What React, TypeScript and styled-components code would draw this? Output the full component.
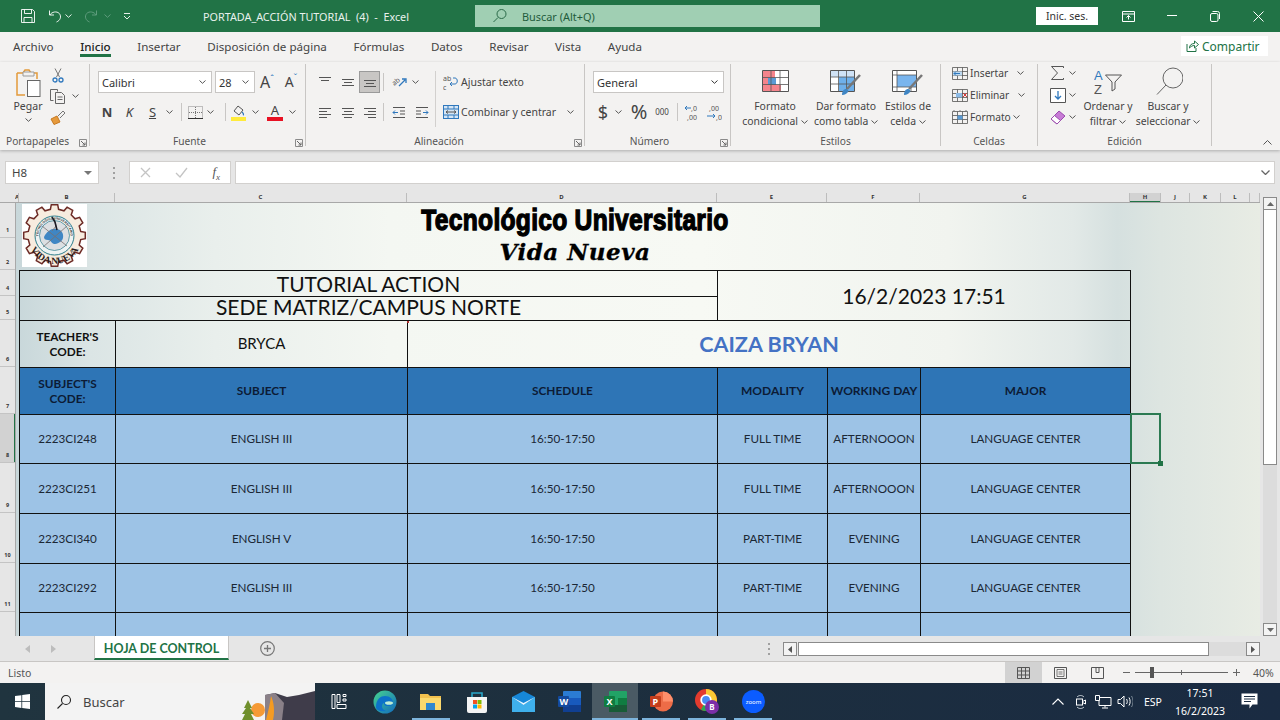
import React from 'react'
import styled, { createGlobalStyle } from 'styled-components'

const UI = `"Noto Sans", "Open Sans", sans-serif`
const SHEET = `Lato, "Open Sans", sans-serif`

const Global = createGlobalStyle`
  html, body { margin: 0; padding: 0; width: 1280px; height: 720px; overflow: hidden; }
  body { font-family: ${UI}; background: #e6e6e6; }
`

const Ic = ({ w, h, children }: { w: number; h: number; children?: React.ReactNode }) => (
  <svg width={w} height={h} viewBox={`0 0 ${w} ${h}`} fill="none" style={{ display: 'block', flex: 'none' }}>
    {children}
  </svg>
)

const Caret = ({ color = '#555' }: { color?: string }) => (
  <Ic w={7} h={4}>
    <path d="M.5.5 3.5 3.3 6.5.5" stroke={color} />
  </Ic>
)

const Launcher = () => (
  <Ic w={8} h={8}>
    <path d="M.5 7.5V.5h7v7z" stroke="#8a8a8a" />
    <path d="M2 2l4 4M6 3.5V6H3.5" stroke="#666" />
  </Ic>
)

const AlignLines = ({ kind, y = 0 }: { kind: 'l' | 'c' | 'r' | 't' | 'm' | 'b'; y?: number }) => {
  const xs = kind === 'l' ? [[1, 13], [1, 9], [1, 13], [1, 9]] : kind === 'r' ? [[1, 13], [5, 13], [1, 13], [5, 13]] : kind === 'c' ? [[1, 13], [3, 11], [1, 13], [3, 11]] : []
  if (xs.length) {
    return (
      <Ic w={14} h={13}>
        {xs.map((p, i) => <path key={i} d={`M${p[0]} ${2.5 + i * 3}H${p[1]}`} stroke="#555" />)}
      </Ic>
    )
  }
  return (
    <Ic w={14} h={14}>
      <path d={`M1 ${y + 2.5}H13M3 ${y + 5.5}H11`} stroke="#555" />
      {kind !== 't' && <path d={`M1 ${y + 8.5}H13`} stroke="#555" />}
    </Ic>
  )
}

const GearLogo = () => {
  const teeth = 12
  const pts: string[] = []
  for (let i = 0; i < teeth; i++) {
    const a = (i / teeth) * Math.PI * 2
    const s = (Math.PI * 2) / teeth
    const p = (r: number, t: number) => `${(32.5 + r * Math.cos(t)).toFixed(1)},${(31.5 + r * Math.sin(t)).toFixed(1)}`
    pts.push(p(26.5, a - s * 0.3), p(31, a - s * 0.2), p(31, a + s * 0.2), p(26.5, a + s * 0.3))
  }
  return (
    <svg width={65} height={63} viewBox="0 0 65 63" style={{ display: 'block' }}>
      <rect width={65} height={63} fill="#fff" />
      <polygon points={pts.join(' ')} fill="#f7ecdf" stroke="#6d2b26" strokeWidth={1.5} />
      <circle cx={32.5} cy={31.5} r={19.5} fill="#eef3f3" stroke="#2c7d8c" strokeWidth={1} />
      <circle cx={32.5} cy={31.5} r={15} fill="#dcdfe2" stroke="#2c7d8c" strokeWidth={0.7} />
      <path d="M22 33c3-6 8-9 12-8 5 0 8 4 7 9-1 4-6 6-9 6-3-1-3-4-6-4s-4-1-4-3z" fill="#3f86c4" />
      <path d="M32 14l2 8-4 5M20 22l25 20M45 22L21 43" stroke="#77706f" strokeWidth={0.8} fill="none" />
      <path d="M30 13l3 5 2 8" stroke="#1b1b25" strokeWidth={1.6} fill="none" />
      <defs>
        <path id="logoTop" d="M17.500 37a16 16 0 1 1 30 0" />
        <path id="logoBottom" d="M5.500 33a27 27 0 0 0 54 0" />
      </defs>
      <text fontFamily='"Liberation Sans", sans-serif' fontSize={3.300} fontWeight={700} fill="#333" textAnchor="middle">
        <textPath href="#logoTop" startOffset="50%">TECNOLOGICO UNIVERSITARIO</textPath>
      </text>
      <text fontFamily='"Liberation Serif", serif' fontSize={9.500} fontWeight={700} fill="#2a1c1a" textAnchor="middle">
        <textPath href="#logoBottom" startOffset="50%">VIDA NUEVA</textPath>
      </text>
    </svg>
  )
}

const columnHeads: [number, string][] = [[4, 'A'], [96, 'B'], [292, 'C'], [310, 'D'], [110, 'E'], [93, 'F'], [210, 'G'], [31, 'H'], [29, 'J'], [31, 'K'], [29, 'L'], [10, '']]
const rowHeads: [number, string][] = [[35, '1'], [32, '2'], [26, '4'], [24, '5'], [47, '6'], [47, '7'], [49, '8'], [50, '9'], [50, '10'], [49, '11'], [30, '']]

const tableRows = [
  ['2223CI248', 'ENGLISH III', '16:50-17:50', 'FULL TIME', 'AFTERNOOON', 'LANGUAGE CENTER'],
  ['2223CI251', 'ENGLISH III', '16:50-17:50', 'FULL TIME', 'AFTERNOOON', 'LANGUAGE CENTER'],
  ['2223CI340', 'ENGLISH V', '16:50-17:50', 'PART-TIME', 'EVENING', 'LANGUAGE CENTER'],
  ['2223CI292', 'ENGLISH III', '16:50-17:50', 'PART-TIME', 'EVENING', 'LANGUAGE CENTER'],
  ['', '', '', '', '', ''],
]

export default function App() {
  return (
    <Shell>
      <Global />
      <TitleBar>
        <Slot $w={20}>
          <Ic w={16} h={16}>
            <path d="M1.5 1.5h11l2 2v11h-13z" stroke="#fff" opacity=".9" />
            <path d="M4.5 1.5v4h7v-4M4 14.5v-5h8v5" stroke="#fff" opacity=".9" />
          </Ic>
        </Slot>
        <Slot $w={9} />
        <Slot $w={16}>
          <Ic w={15} h={14}>
            <path d="M1.5 1.5v4.5h4.5M1.8 6c2-3.200 7-4.200 9.500-1.500 2.500 3 1 7-2.800 8.500" stroke="#fff" opacity=".9" />
          </Ic>
        </Slot>
        <Slot $w={10}><Caret color="#e6f0ea" /></Slot>
        <Slot $w={10} />
        <Slot $w={15}>
          <Ic w={15} h={14}>
            <path d="M13.500 1.500v4.500h-4.500M13.200 6c-2-3.200-7-4.200-9.500-1.500-2.500 3-1 7 2.800 8.500" stroke="#5f9c7d" />
          </Ic>
        </Slot>
        <Slot $w={18}><Caret color="#5f9c7d" /></Slot>
        <Slot $w={4} />
        <Slot $w={14}>
          <Ic w={8} h={8}>
            <path d="M1 1.500h6M1 4l3 3 3-3" stroke="#e6f0ea" />
          </Ic>
        </Slot>
        <DocTitle>PORTADA_ACCIÓN TUTORIAL&nbsp; (4)&nbsp; -&nbsp; Excel</DocTitle>
        <SearchBox>
          <Ic w={16} h={16}>
            <circle cx={9.500} cy={6} r={4.500} stroke="#2a6a48" />
            <path d="M6 9.500 1.500 14" stroke="#2a6a48" />
          </Ic>
          <span>Buscar (Alt+Q)</span>
        </SearchBox>
        <SignIn>Inic. ses.</SignIn>
        <WinBtn $w={60}>
          <Ic w={13} h={11}>
            <path d="M.5.5h12v10H.5zM.5 3h12M6.500 8.500V4.500M4.500 6.500l2-2 2 2" stroke="#fff" />
          </Ic>
        </WinBtn>
        <WinBtn $w={28}><Ic w={10} h={2}><path d="M0 .5h10" stroke="#fff" /></Ic></WinBtn>
        <WinBtn $w={58}>
          <Ic w={10} h={11}>
            <rect x={.5} y={2.500} width={7.500} height={8} rx={1.500} stroke="#fff" />
            <path d="M2.500.5h5a2 2 0 0 1 2 2v5.500" stroke="#fff" />
          </Ic>
        </WinBtn>
        <WinBtn $w={28}><Ic w={11} h={11}><path d="M.5.5l10 10M10.500.5l-10 10" stroke="#fff" /></Ic></WinBtn>
      </TitleBar>

      <TabsRow>
        <Tab>Archivo</Tab>
        <Tab $active>Inicio</Tab>
        <Tab>Insertar</Tab>
        <Tab>Disposición de página</Tab>
        <Tab>Fórmulas</Tab>
        <Tab>Datos</Tab>
        <Tab>Revisar</Tab>
        <Tab>Vista</Tab>
        <Tab>Ayuda</Tab>
        <ShareBtn>
          <Ic w={13} h={12}>
            <path d="M1 4v7.500h9V8M3.500 8c0-3 2-4.500 5-4.500V1l4 3.500-4 3.500V5.500C6.500 5.500 5 6.300 3.500 8z" stroke="#217346" />
          </Ic>
          Compartir
        </ShareBtn>
      </TabsRow>

      <Ribbon>
        <Group $w={90}>
          <Body $left={0} $top={4}>
            <PasteCol>
              <Ic w={26} h={30}>
                <path d="M2 5h6l2-3h4l2 3h6v6M2 5v22h8" stroke="#e39a3b" strokeWidth={1.500} />
                <path d="M8 4h11v4H8z" stroke="#9a9a9a" fill="#f3f2f1" />
                <rect x={12.500} y={12.500} width={12.500} height={16} fill="#fff" stroke="#666" />
              </Ic>
              <PasteLabel>Pegar</PasteLabel>
              <Caret />
            </PasteCol>
            <ClipCol>
              <Slot $w={16} $h={20}>
                <Ic w={12} h={15}>
                  <path d="M3 .5 7.500 9M9 .5 4.500 9" stroke="#777" />
                  <circle cx={3} cy={12} r={2} stroke="#2f78bd" strokeWidth={1.300} />
                  <circle cx={9} cy={12} r={2} stroke="#2f78bd" strokeWidth={1.300} />
                </Ic>
              </Slot>
              <ClipRow>
                <Ic w={15} h={16}>
                  <path d="M3.500 12.500h-3V1.500h7v2" stroke="#666" />
                  <path d="M5.500 4.500h6l3 3v8h-9zM7.500 9h5M7.500 11.500h5" stroke="#666" />
                </Ic>
                <Caret />
              </ClipRow>
              <Slot $w={16} $h={20}>
                <Ic w={16} h={15}>
                  <path d="M1 9l6-3 3 6-6 2.500z" fill="#e69a3c" stroke="#c77a22" />
                  <path d="M8 6l5-5 2 2-5 5" stroke="#777" />
                </Ic>
              </Slot>
            </ClipCol>
          </Body>
          <GroupLabel $left={6}>Portapapeles</GroupLabel>
          <LaunchSpot><Launcher /></LaunchSpot>
        </Group>

        <Group $w={216}>
          <Body $left={8} $col>
            <ToolRow>
              <Select $w={114}>Calibri<Caret /></Select>
              <Select $w={40} $ml={3}>28<Caret /></Select>
              <Slot $w={24}><BigA $size={16}>A<sup>ˆ</sup></BigA></Slot>
              <Slot $w={24}><BigA $size={14}>A<sup>ˇ</sup></BigA></Slot>
            </ToolRow>
            <ToolRow $ml={-2}>
              <Slot $w={22}><Face $bold>N</Face></Slot>
              <Slot $w={23}><Face $italic>K</Face></Slot>
              <Slot $w={23}><Face $under>S</Face></Slot>
              <Slot $w={10}><Caret /></Slot>
              <Slot $w={14}><Rule /></Slot>
              <Slot $w={14}>
                <Ic w={15} h={13}>
                  <path d="M.5.5h14v12H.5z" stroke="#888" strokeDasharray="1 1" />
                  <path d="M7.500 1v11M1 6.500h13" stroke="#777" strokeDasharray="1 1" />
                  <path d="M0 12.500h15" stroke="#333" />
                </Ic>
              </Slot>
              <Slot $w={17}><Caret /></Slot>
              <Slot $w={12}><Rule /></Slot>
              <Slot $w={16}>
                <Ic w={16} h={17}>
                  <path d="M3 7l4-5 5 4-4 5z" stroke="#555" />
                  <path d="M11 8c1.500 1.500 2 2.500 1 3.200" stroke="#2f78bd" strokeWidth={1.200} />
                  <rect y={13} width={15} height={4} fill="#ffeb3b" />
                </Ic>
              </Slot>
              <Slot $w={16}><Caret /></Slot>
              <Slot $w={24}>
                <FontColor>A</FontColor>
              </Slot>
              <Slot $w={10}><Caret /></Slot>
            </ToolRow>
          </Body>
          <GroupLabel $center $shift={16}>Fuente</GroupLabel>
          <LaunchSpot><Launcher /></LaunchSpot>
        </Group>

        <Group $w={279}>
          <Body $left={0}>
            <AlignPane>
              <ToolRow>
                <Slot $w={24}><AlignLines kind="t" /></Slot>
                <Slot $w={22}><AlignLines kind="m" y={2} /></Slot>
                <Pressed $w={21}><AlignLines kind="b" y={3} /></Pressed>
                <Slot $w={7}><Rule /></Slot>
                <Slot $w={24}>
                  <Ic w={18} h={18}>
                    <text x={2} y={11} fontSize={7} fill="#555" fontFamily='"Noto Sans", sans-serif' transform="rotate(-40 6 9)">ab</text>
                    <path d="M9 13l6-6M12 6h4v4" stroke="#2f78bd" strokeWidth={1.300} />
                  </Ic>
                </Slot>
                <Slot $w={8}><Caret /></Slot>
              </ToolRow>
              <ToolRow>
                <Slot $w={24}><AlignLines kind="l" /></Slot>
                <Slot $w={22}><AlignLines kind="c" /></Slot>
                <Slot $w={21}><AlignLines kind="r" /></Slot>
                <Slot $w={7}><Rule /></Slot>
                <Slot $w={23}>
                  <Ic w={14} h={13}>
                    <path d="M1 1.500h12M8 5h5M8 8h5M1 11.500h12" stroke="#555" />
                    <path d="M6 6.500H1M3 4.500l-2 2 2 2" stroke="#2f78bd" />
                  </Ic>
                </Slot>
                <Slot $w={23}>
                  <Ic w={14} h={13}>
                    <path d="M1 1.500h12M1 5h5M1 8h5M1 11.500h12" stroke="#555" />
                    <path d="M8 6.500h5M11 4.500l2 2-2 2" stroke="#2f78bd" />
                  </Ic>
                </Slot>
              </ToolRow>
            </AlignPane>
            <WrapPane>
              <TextTool>
                <Ic w={16} h={18}>
                  <text x={0} y={8} fontSize={7} fill="#555" fontFamily='"Noto Sans", sans-serif'>ab</text>
                  <text x={0} y={17} fontSize={7} fill="#555" fontFamily='"Noto Sans", sans-serif'>c</text>
                  <path d="M10 5h2c3 0 3 6 0 6H7M9 9l-2 2 2 2" stroke="#2f78bd" />
                </Ic>
                Ajustar texto
              </TextTool>
              <TextTool>
                <Ic w={16} h={14}>
                  <rect x={.5} y={.5} width={15} height={13} stroke="#2f78bd" fill="#d5e6f6" />
                  <path d="M.5 4h15M.5 10h15M5 .5V4M11 .5V4M5 10v3.500M11 10v3.500" stroke="#2f78bd" />
                  <path d="M3 7h10M5 5.500 3 7l2 1.500M11 5.500 13 7l-2 1.500" stroke="#555" />
                </Ic>
                Combinar y centrar
                <Slot $w={8} $ml={8}><Caret /></Slot>
              </TextTool>
            </WrapPane>
          </Body>
          <GroupLabel $center $shift={12}>Alineación</GroupLabel>
          <LaunchSpot><Launcher /></LaunchSpot>
        </Group>

        <Group $w={146}>
          <Body $left={8} $col>
            <ToolRow>
              <Select $w={131}>General<Caret color="#333" /></Select>
            </ToolRow>
            <ToolRow>
              <Slot $w={20}><NumGlyph $size={18}>$</NumGlyph></Slot>
              <Slot $w={11}><Caret /></Slot>
              <Slot $w={30}><NumGlyph $size={20}>%</NumGlyph></Slot>
              <Slot $w={16}><NumGlyph $size={8}>000</NumGlyph></Slot>
              <Slot $w={14}><Rule /></Slot>
              <Slot $w={16}>
                <Ic w={16} h={18}>
                  <text x={7} y={8} fontSize={7} fill="#555" fontFamily='"Noto Sans", sans-serif'>,0</text>
                  <text x={3} y={17} fontSize={7} fill="#555" fontFamily='"Noto Sans", sans-serif'>,00</text>
                  <path d="M7 5H1M3 3l-2 2 2 2" stroke="#2f78bd" />
                </Ic>
              </Slot>
              <Slot $w={28}>
                <Ic w={16} h={18}>
                  <text x={3} y={8} fontSize={7} fill="#555" fontFamily='"Noto Sans", sans-serif'>,00</text>
                  <text x={10} y={17} fontSize={7} fill="#555" fontFamily='"Noto Sans", sans-serif'>,0</text>
                  <path d="M1 13h8M7 11l2 2-2 2" stroke="#2f78bd" />
                </Ic>
              </Slot>
            </ToolRow>
          </Body>
          <GroupLabel $center $shift={16}>Número</GroupLabel>
          <LaunchSpot><Launcher /></LaunchSpot>
        </Group>

        <Group $w={210}>
          <Body $left={9} $top={6}>
            <BigBtn $w={70}>
              <IconBox>
                <Ic w={27} h={22}>
                  <path d="M.5.5h26v21H.5z" fill="#fff" stroke="#555" />
                  <rect x={1} y={1} width={12} height={7} fill="#f4848c" />
                  <rect x={1} y={8} width={6} height={7} fill="#f4848c" />
                  <rect x={6} y={8} width={8} height={7} fill="#5a9bd5" />
                  <rect x={1} y={15} width={18} height={6} fill="#f4848c" />
                  <path d="M9 .5v21M18 .5v21M.5 7.500h26M.5 14.500h26" stroke="#555" strokeWidth={.8} />
                </Ic>
              </IconBox>
              <BigLabel>Formato<br />condicional <Caret /></BigLabel>
            </BigBtn>
            <BigBtn $w={72}>
              <IconBox>
                <Ic w={32} h={26}>
                  <path d="M.5.5h24v21H.5z" fill="#fff" stroke="#555" />
                  <rect x={1} y={1} width={23} height={6} fill="#cfe2f5" />
                  <rect x={9} y={7} width={15} height={14} fill="#6fb0ea" />
                  <path d="M8.500.5v21M16.500.5v21M.5 7h24M.5 14h24" stroke="#555" strokeWidth={.8} />
                  <path d="M30 5 17 19" stroke="#777" strokeWidth={2.500} />
                  <path d="M12 25c0-4 2-6 4-6s3 2 2 3-3 3-6 3z" fill="#3f86c4" />
                </Ic>
              </IconBox>
              <BigLabel>Dar formato<br />como tabla <Caret /></BigLabel>
            </BigBtn>
            <BigBtn $w={52}>
              <IconBox>
                <Ic w={32} h={26}>
                  <path d="M.5.5h24v21H.5z" fill="#fff" stroke="#555" />
                  <rect x={5} y={5} width={19} height={12} fill="#79b5ee" />
                  <path d="M.5 5h24M.5 17h24M5 .5v21M19 17v4.500" stroke="#555" strokeWidth={.8} />
                  <path d="M30 5 17 19" stroke="#777" strokeWidth={2.500} />
                  <path d="M12 25c0-4 2-6 4-6s3 2 2 3-3 3-6 3z" fill="#3f86c4" />
                </Ic>
              </IconBox>
              <BigLabel>Estilos de<br />celda <Caret /></BigLabel>
            </BigBtn>
          </Body>
          <GroupLabel $center>Estilos</GroupLabel>
        </Group>

        <Group $w={97}>
          <Body $left={11} $top={0} $col $gap={0} $raise={2}>
            <CellTool>
              <CellIcon $kind="ins" />
              Insertar
              <Slot $w={7} $ml={7}><Caret /></Slot>
            </CellTool>
            <CellTool>
              <CellIcon $kind="del" />
              Eliminar
              <Slot $w={7} $ml={7}><Caret /></Slot>
            </CellTool>
            <CellTool>
              <CellIcon $kind="fmt" />
              Formato
              <Slot $w={7}><Caret /></Slot>
            </CellTool>
          </Body>
          <GroupLabel $center>Celdas</GroupLabel>
        </Group>

        <Group $w={174}>
          <Body $left={12} $top={0} $raise={2}>
            <EditCol>
              <EditRow>
                <Ic w={16} h={16}><path d="M13.500 3V1.500h-12l6 6.500-6 6.500h12V13" stroke="#555" /></Ic>
                <Caret />
              </EditRow>
              <EditRow>
                <Ic w={16} h={15}>
                  <path d="M.5.5h15v14H.5z" stroke="#555" fill="#fff" />
                  <path d="M8 3v8M5 8l3 3 3-3" stroke="#2f78bd" strokeWidth={1.300} />
                </Ic>
                <Caret />
              </EditRow>
              <EditRow>
                <Ic w={16} h={15}>
                  <path d="M1 9l8-8 6 5-8 8z" fill="#c77bd6" stroke="#9a4bad" />
                  <path d="M1 9l3.500-3.500 6 5L7 14z" fill="#fff" stroke="#9a4bad" />
                </Ic>
                <Caret />
              </EditRow>
            </EditCol>
            <BigBtn $w={60} $mt={5}>
              <IconBox $h={32}>
                <Ic w={28} h={29}>
                  <text x={0} y={13} fontSize={13} fill="#2f78bd" fontFamily='"Liberation Sans", sans-serif'>A</text>
                  <text x={0} y={27} fontSize={13} fill="#555" fontFamily='"Liberation Sans", sans-serif'>Z</text>
                  <path d="M11.500 8h16l-6.500 7v7l-3 2v-9z" stroke="#555" fill="#f3f2f1" />
                </Ic>
              </IconBox>
              <BigLabel>Ordenar y<br />filtrar <Caret /></BigLabel>
            </BigBtn>
            <BigBtn $w={60} $mt={5}>
              <IconBox $h={32}>
                <Ic w={30} h={28}>
                  <circle cx={20} cy={11} r={10} stroke="#666" />
                  <path d="M13 18 4 27.500" stroke="#666" />
                </Ic>
              </IconBox>
              <BigLabel>Buscar y<br />seleccionar <Caret /></BigLabel>
            </BigBtn>
          </Body>
          <GroupLabel $center>Edición</GroupLabel>
        </Group>
        <CollapseSpot>
          <Ic w={9} h={5}><path d="M.5 4.500l4-4 4 4" stroke="#555" /></Ic>
        </CollapseSpot>
      </Ribbon>

      <FormulaBand>
        <NameBox>H8<Ic w={8} h={4}><path d="M0 0h8L4 4z" fill="#777" /></Ic></NameBox>
        <DotsSlot><Dots /></DotsSlot>
        <FxBox>
          <Ic w={11} h={11}><path d="M1 1l9 9M10 1l-9 9" stroke="#c4c4c4" strokeWidth={1.300} /></Ic>
          <Ic w={13} h={11}><path d="M1 6l4 4 7-9" stroke="#c4c4c4" strokeWidth={1.300} /></Ic>
          <FxGlyph>f<sub>x</sub></FxGlyph>
        </FxBox>
        <FormulaInput>
          <Ic w={9} h={5}><path d="M.5.5l4 4 4-4" stroke="#666" strokeWidth={1.300} /></Ic>
        </FormulaInput>
      </FormulaBand>

      <Workbook>
        <SheetColumn>
          <ColumnHeads>
            <ColCorner />
            {columnHeads.map(([w, label], i) => (
              <ColHead key={i} $w={w} $selected={label === 'H'}>{label}</ColHead>
            ))}
          </ColumnHeads>
          <SheetBody>
            <RowHeads>
              {rowHeads.map(([h, label], i) => (
                <RowHead key={i} $h={h} $selected={label === '8'}>{label}</RowHead>
              ))}
            </RowHeads>
            <Canvas>
              <Banner>
                <LogoBox><GearLogo /></LogoBox>
                <TitleBlock>
                  <SchoolName>Tecnológico Universitario</SchoolName>
                  <SchoolTag>Vida Nueva</SchoolTag>
                </TitleBlock>
              </Banner>
              <Table>
                <Cell $span={3} $size={21}>TUTORIAL ACTION</Cell>
                <Cell $span={3} $rows={2} $size={21}>16/2/2023 17:51</Cell>
                <Cell $span={3} $size={21} $lift={3}>SEDE MATRIZ/CAMPUS NORTE</Cell>
                <Cell $bold $size={11.800}>TEACHER'S<br />CODE:</Cell>
                <Cell $size={15} $flag>BRYCA</Cell>
                <Cell $span={4} $bold $size={21.600} $color="#4472c4">CAIZA BRYAN</Cell>
                <Cell $head $bold $size={11.800}>SUBJECT'S<br />CODE:</Cell>
                <Cell $head $bold $size={11.800}>SUBJECT</Cell>
                <Cell $head $bold $size={11.800}>SCHEDULE</Cell>
                <Cell $head $bold $size={12}>MODALITY</Cell>
                <Cell $head $bold $size={12}>WORKING DAY</Cell>
                <Cell $head $bold $size={11.800}>MAJOR</Cell>
                {tableRows.map((row, r) =>
                  row.map((text, c) => (
                    <Cell key={`${r}-${c}`} $body $size={11.700}>{text}</Cell>
                  ))
                )}
              </Table>
              <Selection><Handle /></Selection>
            </Canvas>
          </SheetBody>
        </SheetColumn>
        <VScroll>
          <ScrollBtn $h={13}><Ic w={7} h={4}><path d="M0 4h7L3.500 0z" fill="#666" /></Ic></ScrollBtn>
          <VThumb />
          <VTrack />
          <ScrollBtn $h={13}><Ic w={7} h={4}><path d="M0 0h7L3.500 4z" fill="#666" /></Ic></ScrollBtn>
        </VScroll>
      </Workbook>

      <TabBar>
        <NavArrows>
          <Ic w={5} h={8}><path d="M5 0v8L0 4z" fill="#bdbdbd" /></Ic>
          <Ic w={5} h={8}><path d="M0 0v8l5-4z" fill="#bdbdbd" /></Ic>
        </NavArrows>
        <SheetTab>HOJA DE CONTROL</SheetTab>
        <AddSheet>
          <Ic w={15} h={15}>
            <circle cx={7.500} cy={7.500} r={6.800} stroke="#777" strokeWidth={1.200} />
            <path d="M7.500 4v7M4 7.500h7" stroke="#777" strokeWidth={1.300} />
          </Ic>
        </AddSheet>
        <TabGap />
        <DotsSlot $w={29}><Dots /></DotsSlot>
        <HScroll>
          <ScrollBtn $w={14}><Ic w={4} h={7}><path d="M4 0v7L0 3.500z" fill="#555" /></Ic></ScrollBtn>
          <HThumb />
          <HTrack />
          <ScrollBtn $w={14}><Ic w={4} h={7}><path d="M0 0v7l4-3.500z" fill="#555" /></Ic></ScrollBtn>
        </HScroll>
      </TabBar>

      <StatusBar>
        <StatusText>Listo</StatusText>
        <ViewBtn $on>
          <Ic w={13} h={12}><path d="M.5.5h12v11H.5zM4.500.5v11M8.500.5v11M.5 4h12M.5 8h12" stroke="#555" /></Ic>
        </ViewBtn>
        <ViewBtn>
          <Ic w={13} h={12}><path d="M.5.5h12v11H.5z" stroke="#555" /><path d="M3 2.500h7v7H3zM4.500 5h4M4.500 7h4" stroke="#555" strokeWidth={.8} /></Ic>
        </ViewBtn>
        <ViewBtn>
          <Ic w={13} h={12}><path d="M.5.5h12v11H.5zM5 .5v5h3v-5" stroke="#555" /></Ic>
        </ViewBtn>
        <ZoomZone>
          <Ic w={7} h={1}><path d="M0 .5h7" stroke="#666" /></Ic>
          <ZoomTrack>
            <ZoomMid />
            <ZoomThumb />
          </ZoomTrack>
          <Ic w={7} h={7}><path d="M0 3.500h7M3.500 0v7" stroke="#666" /></Ic>
          <StatusText $pct>40%</StatusText>
        </ZoomZone>
      </StatusBar>

      <Taskbar>
        <StartBtn>
          <Ic w={15} h={15}>
            <path d="M0 2.100 6.400 1.200v6H0zM7.200 1.100 15 0v7.200H7.200zM0 8h6.400v6L0 13.100zM7.200 8H15v7l-7.800-1.100z" fill="#fff" />
          </Ic>
        </StartBtn>
        <TaskSearch>
          <Ic w={16} h={16}>
            <circle cx={10} cy={6} r={4.500} stroke="#222" strokeWidth={1.100} />
            <path d="M6.500 9.500 1.500 14.500" stroke="#222" strokeWidth={1.100} />
          </Ic>
          <span>Buscar</span>
          <Scenery>
            <svg width={76} height={37} viewBox="0 0 76 37" style={{ display: 'block' }}>
              <path d="M26 12 36 10 48 14 60 12 76 8V37H26z" fill="#3f3c4a" />
              <path d="M26 12 36 10 45 20 43 37H26z" fill="#8a8088" />
              <path d="M32 13c3 6 4 16 2 24h-7c2-8 4-16 5-24z" fill="#f59b22" />
              <circle cx={19} cy={27} r={7} fill="#f59a36" />
              <path d="M9 17l4 8h-2l4 6h-3l3 6H3l3-6H3l4-6H5z" fill="#6f8f2c" />
            </svg>
          </Scenery>
        </TaskSearch>
        <TaskApps>
          <TaskApp>
            <Ic w={16} h={15}>
              <path d="M1 .5h3v14H1zM6 .5h3v8H6zM12 .5h3v2h-3zM12 5h3v2h-3zM6 10.500h9v4H6z" stroke="#fff" />
            </Ic>
          </TaskApp>
          <TaskApp $w={46}>
            <svg width={24} height={24} viewBox="0 0 24 24">
              <defs>
                <linearGradient id="edge" x1="0" y1="0" x2="1" y2="1">
                  <stop offset="0" stopColor="#46d58f" />
                  <stop offset="1" stopColor="#1169bf" />
                </linearGradient>
              </defs>
              <circle cx={12} cy={12} r={11.500} fill="url(#edge)" />
              <path d="M3 17c0-8 5-11 9-11 5 0 8 3 8 7 0 3-3 3-6 3-2 0-3-1-3-3-2 0-4 6 2 8-6 1-10-1-10-4z" fill="#0d72c9" />
              <ellipse cx={16} cy={13} rx={4} ry={1.800} fill="#bdeed5" />
            </svg>
          </TaskApp>
          <TaskApp $w={46} $run>
            <Ic w={22} h={19}>
              <path d="M0 2h8l2 2h11v14H0z" fill="#f2c14e" />
              <path d="M0 6h21v12H0z" fill="#fbd96d" />
              <rect x={6} y={11} width={9} height={7} fill="#2f88cf" />
            </Ic>
          </TaskApp>
          <TaskApp $w={46}>
            <Ic w={22} h={22}>
              <path d="M1 6h20v14a2 2 0 0 1-2 2H3a2 2 0 0 1-2-2z" fill="#f4f4f4" />
              <path d="M6 6V2h10v4" stroke="#28a6c9" strokeWidth={1.600} />
              <rect x={7} y={9} width={4} height={4} fill="#f25022" />
              <rect x={11.500} y={9} width={4} height={4} fill="#7fba00" />
              <rect x={7} y={13.500} width={4} height={4} fill="#00a4ef" />
              <rect x={11.500} y={13.500} width={4} height={4} fill="#ffb900" />
            </Ic>
          </TaskApp>
          <TaskApp $w={46}>
            <Ic w={23} h={21}>
              <path d="M0 6l11.500-6L23 6v15H0z" fill="#1687d8" />
              <path d="M0 6l11.500 8L23 6v15H0z" fill="#3fb0ec" />
              <path d="M0 6l11.500 8L23 6 11.500 12z" fill="#e8f6ff" />
            </Ic>
          </TaskApp>
          <TaskApp $w={46}>
            <Ic w={23} h={21}>
              <rect x={5} width={18} height={21} rx={1} fill="#2b7cd3" />
              <rect x={5} y={7} width={18} height={7} fill="#185abd" />
              <rect x={5} y={14} width={18} height={7} fill="#103f91" />
              <rect y={5} width={11} height={11} rx={1} fill="#134a9e" />
              <text x={1.500} y={14} fontSize={9} fontWeight={700} fill="#fff" fontFamily='"Noto Sans", sans-serif'>W</text>
            </Ic>
          </TaskApp>
          <TaskApp $w={46} $run $active>
            <Ic w={23} h={21}>
              <rect x={5} width={18} height={21} rx={1} fill="#21a366" />
              <rect x={14} y={7} width={9} height={7} fill="#107c41" />
              <rect x={5} y={14} width={18} height={7} fill="#185c37" />
              <rect y={5} width={11} height={11} rx={1} fill="#107c41" />
              <text x={2.500} y={14} fontSize={9} fontWeight={700} fill="#fff" fontFamily='"Noto Sans", sans-serif'>X</text>
            </Ic>
          </TaskApp>
          <TaskApp $w={46} $run>
            <Ic w={23} h={21}>
              <circle cx={13} cy={10.500} r={10} fill="#ed6c47" />
              <path d="M13 .5a10 10 0 0 1 10 10H13z" fill="#ff8f6b" />
              <rect y={5} width={11} height={11} rx={1} fill="#c43e1c" />
              <text x={2.500} y={14} fontSize={9} fontWeight={700} fill="#fff" fontFamily='"Noto Sans", sans-serif'>P</text>
            </Ic>
          </TaskApp>
          <TaskApp $w={46} $run>
            <Ic w={25} h={25}>
              <circle cx={11} cy={11} r={11} fill="#e33b2e" />
              <path d="M11 11 20.500 16.500A11 11 0 0 1 6 20.800z" fill="#2da94f" />
              <path d="M11 0a11 11 0 0 1 10 15.500L11 11z" fill="#fcc934" />
              <circle cx={11} cy={11} r={4.800} fill="#4a8af4" stroke="#fff" strokeWidth={1.800} />
              <circle cx={17} cy={18} r={7} fill="#7b2fa8" />
              <text x={14.300} y={21} fontSize={8} fontWeight={700} fill="#fff" fontFamily='"Noto Sans", sans-serif'>B</text>
            </Ic>
          </TaskApp>
          <TaskApp $w={46} $run>
            <Ic w={23} h={23}>
              <circle cx={11.500} cy={11.500} r={11.500} fill="#0b5cff" />
              <text x={11.500} y={13.500} fontSize={6} textAnchor="middle" fill="#fff" fontFamily='"Noto Sans", sans-serif'>zoom</text>
            </Ic>
          </TaskApp>
        </TaskApps>
        <Tray>
          <Slot $w={22}><Ic w={12} h={7}><path d="M.5 6.500l5.500-5.500 5.500 5.500" stroke="#fff" strokeWidth={1.100} /></Ic></Slot>
          <Slot $w={23}>
            <Ic w={12} h={16}>
              <path d="M2 3c2-2 5-2 7 0M2 13c2 2 5 2 7 0" stroke="#cfd6dc" />
              <rect x={1.500} y={5} width={6} height={6} stroke="#fff" />
              <path d="M7.500 7.500l3-1.500v4l-3-1.500" stroke="#fff" />
            </Ic>
          </Slot>
          <Slot $w={22}>
            <Ic w={17} h={14}>
              <path d="M4 2.500h12v8H4zM10 10.500v2M7 13h6" stroke="#fff" />
              <path d="M.5.5h4v5h-4z" stroke="#fff" fill="#1b2c42" />
            </Ic>
          </Slot>
          <Slot $w={22}>
            <Ic w={16} h={13}>
              <path d="M1 4.500h2.500L7 1v11L3.500 8.500H1z" stroke="#fff" />
              <path d="M9.500 4c1 1.500 1 3.500 0 5M12 2.500c1.500 2.500 1.500 5.500 0 8" stroke="#fff" />
              <path d="M14.500 1c2 3.500 2 7.500 0 11" stroke="#7f8c99" />
            </Ic>
          </Slot>
          <TrayLang>ESP</TrayLang>
          <Clock>17:51<br />16/2/2023</Clock>
          <NotifySlot>
            <Ic w={17} h={17}>
              <path d="M.5.5h16v11h-5l-3 4v-4H.5z" fill="#fff" />
              <path d="M3 3.500h11M3 6h11M3 8.500h7" stroke="#1b2c42" />
            </Ic>
          </NotifySlot>
        </Tray>
      </Taskbar>
    </Shell>
  )
}

const CellIcon = ({ $kind }: { $kind: 'ins' | 'del' | 'fmt' }) => (
  <Ic w={16} h={14}>
    <path d="M.5 1.500h15v12H.5zM5.500 1.500v12M10.500 1.500v12M.5 5.500h15M.5 9.500h15" stroke="#555" strokeWidth={.8} />
    {$kind === 'ins' && <><rect x={1} y={5.500} width={9} height={4} fill="#bcd9f2" /><path d="M8 7.500H2M4 5.500l-2 2 2 2" stroke="#2f78bd" /></>}
    {$kind === 'del' && <><rect x={4} y={5} width={6} height={4.500} fill="#8dbbe6" /><path d="M11 5l4 4M15 5l-4 4" stroke="#d83b3b" /></>}
    {$kind === 'fmt' && <><rect x={5.500} y={5.500} width={5} height={4} fill="#5a9bd5" /><path d="M2 0v1M8 0v1M14 0v1" stroke="#777" /></>}
  </Ic>
)

const Shell = styled.div`
  width: 1280px;
  height: 720px;
  display: flex;
  flex-direction: column;
  overflow: hidden;
  color: #444;
`

const Slot = styled.span<{ $w: number; $h?: number; $ml?: number }>`
  display: flex;
  flex: none;
  align-items: center;
  justify-content: center;
  width: ${(p) => p.$w}px;
  height: ${(p) => (p.$h ? `${p.$h}px` : 'auto')};
  margin-left: ${(p) => p.$ml ?? 0}px;
`

const TitleBar = styled.header`
  flex: 0 0 32px;
  display: flex;
  align-items: center;
  padding-left: 18px;
  background: #217346;
`

const DocTitle = styled.div`
  width: 272px;
  flex: none;
  margin-left: 69px;
  font-size: 10.800px;
  color: #e9f2ed;
  white-space: nowrap;
`

const SearchBox = styled.div`
  width: 345px;
  height: 22px;
  flex: none;
  display: flex;
  align-items: center;
  gap: 14px;
  padding-left: 17px;
  box-sizing: border-box;
  background: #a0cfb3;
  font-size: 10.900px;
  color: #1f5c3c;
`

const SignIn = styled.div`
  width: 62px;
  height: 18px;
  flex: none;
  margin-left: 216px;
  display: flex;
  align-items: center;
  justify-content: center;
  background: #fff;
  color: #333;
  font-size: 10.500px;
`

const WinBtn = styled.div<{ $w: number }>`
  width: ${(p) => p.$w}px;
  height: 32px;
  flex: none;
  display: flex;
  align-items: center;
  justify-content: center;
`

const TabsRow = styled.nav`
  flex: 0 0 30px;
  box-sizing: border-box;
  display: flex;
  align-items: center;
  gap: 26.600px;
  padding: 0 0 2px 13px;
  background: #f3f2f1;
`

const Tab = styled.div<{ $active?: boolean }>`
  position: relative;
  font-size: 11.600px;
  color: ${(p) => (p.$active ? '#222' : '#444')};
  font-weight: ${(p) => (p.$active ? 500 : 400)};
  white-space: nowrap;

  &::after {
    content: '';
    display: ${(p) => (p.$active ? 'block' : 'none')};
    position: absolute;
    left: 0;
    right: 0;
    bottom: -3px;
    height: 3px;
    background: #217346;
  }
`

const ShareBtn = styled.div`
  margin-left: auto;
  margin-right: 12px;
  width: 87px;
  height: 20px;
  box-sizing: border-box;
  display: flex;
  align-items: center;
  gap: 3px;
  padding-left: 5px;
  background: #fff;
  color: #217346;
  font-size: 12px;
  white-space: nowrap;
`

const Ribbon = styled.section`
  position: relative;
  z-index: 2;
  flex: 0 0 88px;
  min-height: 0;
  display: flex;
  background: #f3f2f1;
  box-shadow: 0 1px 3px rgba(0, 0, 0, 0.25);
`

const Group = styled.div<{ $w: number }>`
  position: relative;
  width: ${(p) => p.$w}px;
  flex: none;
  min-height: 0;
  box-sizing: border-box;
  display: flex;
  flex-direction: column;
  margin: 2px 0 4px;
  border-right: 1px solid #c8c6c4;
`

const Body = styled.div<{ $left: number; $top?: number; $col?: boolean; $gap?: number; $raise?: number }>`
  flex: 1;
  min-height: 0;
  display: flex;
  flex-direction: ${(p) => (p.$col ? 'column' : 'row')};
  gap: ${(p) => p.$gap ?? (p.$col ? 8 : 0)}px;
  padding-left: ${(p) => p.$left}px;
  padding-top: ${(p) => p.$top ?? 7}px;
  margin-top: ${(p) => -(p.$raise ?? 0)}px;
`

const GroupLabel = styled.div<{ $left?: number; $center?: boolean; $shift?: number }>`
  flex: 0 0 16px;
  margin-bottom: -4px;
  font-size: 10.200px;
  line-height: 15px;
  color: #555;
  white-space: nowrap;
  padding-left: ${(p) => p.$left ?? 0}px;
  padding-right: ${(p) => p.$shift ?? 0}px;
  text-align: ${(p) => (p.$center ? 'center' : 'left')};
`

const LaunchSpot = styled.span`
  position: absolute;
  right: 2px;
  bottom: -1px;
`

const CollapseSpot = styled.span`
  position: absolute;
  right: 8px;
  bottom: 5px;
`

const ToolRow = styled.div<{ $ml?: number }>`
  height: 22px;
  display: flex;
  align-items: center;
  margin-left: ${(p) => p.$ml ?? 0}px;
`

const PasteCol = styled.div`
  width: 50px;
  display: flex;
  flex-direction: column;
  align-items: center;
  padding-left: 6px;
  box-sizing: border-box;
`

const PasteLabel = styled.div`
  font-size: 10.500px;
  line-height: 14px;
  margin: 1px 0 5px;
`

const ClipCol = styled.div`
  display: flex;
  flex-direction: column;
  gap: 1px;
  margin-top: -3px;
`

const ClipRow = styled.div`
  display: flex;
  align-items: center;
  gap: 7px;
  height: 20px;
`

const Select = styled.div<{ $w: number; $ml?: number }>`
  width: ${(p) => p.$w}px;
  height: 22px;
  margin-left: ${(p) => p.$ml ?? 0}px;
  box-sizing: border-box;
  border: 1px solid #c8c6c4;
  background: #fff;
  display: flex;
  align-items: center;
  justify-content: space-between;
  padding: 0 5px 0 3px;
  font-size: 11px;
  color: #333;
`

const BigA = styled.span<{ $size: number }>`
  font-size: ${(p) => p.$size}px;
  line-height: 1;
  color: #444;

  sup {
    font-size: 9px;
    color: #2f78bd;
    line-height: 0;
  }
`

const Face = styled.span<{ $bold?: boolean; $italic?: boolean; $under?: boolean }>`
  font-size: 13px;
  color: #444;
  font-weight: ${(p) => (p.$bold ? 700 : 400)};
  font-style: ${(p) => (p.$italic ? 'italic' : 'normal')};
  text-decoration: ${(p) => (p.$under ? 'underline' : 'none')};
`

const FontColor = styled.span`
  width: 16px;
  text-align: center;
  font-size: 13px;
  line-height: 13px;
  color: #444;
  border-bottom: 4px solid #e81123;
`

const Rule = styled.span`
  display: block;
  width: 1px;
  height: 18px;
  background: #c8c6c4;
`

const Pressed = styled(Slot)`
  height: 22px;
  background: #c8c6c4;
  border: 1px solid #9a9a9a;
  box-sizing: border-box;
`

const AlignPane = styled.div`
  width: 130px;
  box-sizing: border-box;
  padding-left: 7px;
  display: flex;
  flex-direction: column;
  gap: 8px;
  border-right: 1px solid #d2d0ce;
  height: 56px;
`

const WrapPane = styled.div`
  padding-left: 7px;
  display: flex;
  flex-direction: column;
  gap: 8px;
`

const TextTool = styled.div`
  height: 22px;
  display: flex;
  align-items: center;
  gap: 2px;
  font-size: 10.500px;
  color: #444;
  white-space: nowrap;
`

const NumGlyph = styled.span<{ $size: number }>`
  font-size: ${(p) => p.$size}px;
  color: #444;
  line-height: 1;
`

const BigBtn = styled.div<{ $w: number; $mt?: number }>`
  width: ${(p) => p.$w}px;
  flex: none;
  margin-top: ${(p) => p.$mt ?? 0}px;
  display: flex;
  flex-direction: column;
  align-items: center;
`

const IconBox = styled.div<{ $h?: number }>`
  height: ${(p) => p.$h ?? 29}px;
  display: flex;
  align-items: flex-start;
  justify-content: center;
`

const BigLabel = styled.div`
  font-size: 10.400px;
  line-height: 15px;
  text-align: center;
  white-space: nowrap;
  color: #444;

  svg {
    display: inline-block !important;
    vertical-align: middle;
  }
`

const CellTool = styled.div`
  height: 22px;
  display: flex;
  align-items: center;
  gap: 2px;
  font-size: 10.200px;
  color: #444;
  white-space: nowrap;
`

const EditCol = styled.div`
  width: 28px;
  flex: none;
  display: flex;
  flex-direction: column;
`

const EditRow = styled.div`
  height: 22px;
  display: flex;
  align-items: center;
  gap: 3px;
`

const FormulaBand = styled.div`
  flex: 0 0 43px;
  box-sizing: border-box;
  display: flex;
  padding: 11px 5px 9px;
  background: #e6e6e6;
`

const NameBox = styled.div`
  width: 94px;
  box-sizing: border-box;
  background: #fff;
  border: 1px solid #d2d0ce;
  display: flex;
  align-items: center;
  justify-content: space-between;
  padding: 0 6px;
  font-size: 11.500px;
  color: #444;
`

const DotsSlot = styled.div<{ $w?: number }>`
  width: ${(p) => p.$w ?? 30}px;
  flex: none;
  display: flex;
  align-items: center;
  justify-content: center;
`

const Dots = styled.span`
  width: 2px;
  height: 2px;
  background: #a0a0a0;
  box-shadow: 0 -5px 0 #a0a0a0, 0 5px 0 #a0a0a0;
`

const FxBox = styled.div`
  width: 102px;
  box-sizing: border-box;
  background: #fff;
  border: 1px solid #d2d0ce;
  display: flex;
  align-items: center;
  justify-content: space-between;
  padding: 0 10px;
`

const FxGlyph = styled.span`
  font-family: "Liberation Serif", serif;
  font-style: italic;
  font-size: 13px;
  color: #555;

  sub {
    font-size: 9px;
  }
`

const FormulaInput = styled.div`
  width: 1040px;
  margin-left: 4px;
  box-sizing: border-box;
  background: #fff;
  border: 1px solid #d2d0ce;
  display: flex;
  align-items: center;
  justify-content: flex-end;
  padding-right: 4px;
`

const Workbook = styled.div`
  flex: 1;
  min-height: 0;
  display: flex;
  background: #e6e6e6;
`

const SheetColumn = styled.div`
  width: 1260px;
  flex: none;
  display: flex;
  flex-direction: column;
`

const ColumnHeads = styled.div`
  flex: 0 0 10px;
  box-sizing: border-box;
  display: flex;
  border-bottom: 1px solid #a8a8a8;
`

const ColCorner = styled.div`
  width: 15px;
`

const ColHead = styled.div<{ $w: number; $selected?: boolean }>`
  width: ${(p) => p.$w}px;
  flex: none;
  box-sizing: border-box;
  border-right: 1px solid #bdbdbd;
  background: ${(p) => (p.$selected ? '#d2d2d2' : 'transparent')};
  box-shadow: ${(p) => (p.$selected ? 'inset 0 -1px 0 #217346' : 'none')};
  font-size: 6px;
  line-height: 9px;
  font-weight: 700;
  text-align: center;
  color: #333;
  overflow: hidden;
`

const SheetBody = styled.div`
  flex: 1;
  min-height: 0;
  display: flex;
`

const RowHeads = styled.div`
  width: 15px;
  flex: none;
  overflow: hidden;
`

const RowHead = styled.div<{ $h: number; $selected?: boolean }>`
  height: ${(p) => p.$h}px;
  box-sizing: border-box;
  display: flex;
  align-items: flex-end;
  justify-content: center;
  padding-bottom: 3px;
  border-bottom: 1px solid #c4c4c4;
  background: ${(p) => (p.$selected ? '#d2d2d2' : 'transparent')};
  box-shadow: ${(p) => (p.$selected ? 'inset -1px 0 0 #217346' : 'none')};
  font-size: 5.500px;
  font-weight: 700;
  color: #333;
`

const Canvas = styled.div`
  position: relative;
  flex: 1;
  min-width: 0;
  box-sizing: border-box;
  overflow: hidden;
  padding-left: 3px;
  border-left: 1px solid #a8a8a8;
  background: linear-gradient(
    90deg,
    #c8d7da 0,
    #dbe5e5 6%,
    #e9efec 16%,
    #f4f7f2 30%,
    #f7f9f4 55%,
    #f1f4ef 75%,
    #e2e9e7 85%,
    #d5e0df 88.500%,
    #dde5e1 92%,
    #e8ece4 100%
  );
`

const Banner = styled.div`
  height: 67px;
  display: flex;
`

const LogoBox = styled.div`
  width: 68px;
  padding: 1px 0 0 3px;
  box-sizing: border-box;
  flex: none;
`

const TitleBlock = styled.div`
  width: 976px;
  flex: none;
  text-align: center;
  color: #000;
`

const SchoolName = styled.div`
  font-family: "Liberation Sans", sans-serif;
  font-weight: 700;
  font-size: 29px;
  line-height: 35px;
  -webkit-text-stroke: 1.300px #000;
  letter-spacing: 0.3px;
  white-space: nowrap;
  transform: scaleX(0.85);
`

const SchoolTag = styled.div`
  font-family: "DejaVu Serif", serif;
  font-style: italic;
  font-weight: 700;
  font-size: 23px;
  line-height: 28px;
  letter-spacing: 0.5px;
  -webkit-text-stroke: 0.3px #000;
  white-space: nowrap;
`

const Table = styled.div`
  width: 1112px;
  display: grid;
  grid-template-columns: 96px 292px 310px 110px 93px 210px;
  grid-template-rows: 26px 24px 47px 47px 49px 50px 50px 49px 60px;
  border-top: 1px solid #111;
  border-left: 1px solid #111;
  box-sizing: border-box;
  font-family: ${SHEET};
`

const Cell = styled.div<{
  $span?: number
  $rows?: number
  $size: number
  $bold?: boolean
  $head?: boolean
  $body?: boolean
  $flag?: boolean
  $lift?: number
  $color?: string
}>`
  position: relative;
  grid-column: span ${(p) => p.$span ?? 1};
  grid-row: span ${(p) => p.$rows ?? 1};
  display: flex;
  align-items: center;
  justify-content: center;
  text-align: center;
  box-sizing: border-box;
  padding-bottom: ${(p) => p.$lift ?? 0}px;
  border-right: 1px solid #111;
  border-bottom: 1px solid #111;
  font-size: ${(p) => p.$size}px;
  font-weight: ${(p) => (p.$bold ? 700 : 400)};
  line-height: 1.3;
  white-space: nowrap;
  color: ${(p) => p.$color ?? (p.$head ? '#0c1b35' : p.$body ? '#1b2735' : '#111')};
  background: ${(p) => (p.$head ? '#2e75b6' : p.$body ? '#9dc3e6' : 'transparent')};

  &::after {
    content: '';
    display: ${(p) => (p.$flag ? 'block' : 'none')};
    position: absolute;
    top: 0;
    right: -2px;
    width: 2px;
    height: 2px;
    background: #b03030;
  }
`

const Selection = styled.div`
  position: absolute;
  left: 1114px;
  top: 210px;
  width: 31px;
  height: 51px;
  box-sizing: border-box;
  border: 2px solid #2b7a52;
`

const Handle = styled.span`
  position: absolute;
  right: -4px;
  bottom: -4px;
  width: 5px;
  height: 5px;
  background: #217346;
`

const VScroll = styled.aside`
  width: 14px;
  margin: 4px 0 0 3px;
  display: flex;
  flex-direction: column;
`

const ScrollBtn = styled.div<{ $w?: number; $h?: number }>`
  flex: none;
  width: ${(p) => (p.$w ? `${p.$w}px` : 'auto')};
  height: ${(p) => (p.$h ? `${p.$h}px` : 'auto')};
  box-sizing: border-box;
  border: 1px solid #8a8a8a;
  background: #f3f3f3;
  display: flex;
  align-items: center;
  justify-content: center;
`

const VThumb = styled.div`
  flex: 0 0 255px;
  box-sizing: border-box;
  border: 1px solid #8a8a8a;
  border-top: 0;
  background: #fff;
`

const VTrack = styled.div`
  flex: 1;
  background: #dcdcdc;
`

const TabBar = styled.div`
  flex: 0 0 26px;
  display: flex;
  align-items: stretch;
  background: #e6e6e6;
  border-bottom: 1px solid #c8c6c4;
  box-sizing: border-box;
`

const NavArrows = styled.div`
  width: 94px;
  flex: none;
  box-sizing: border-box;
  display: flex;
  align-items: center;
  gap: 21px;
  padding-left: 25px;
`

const SheetTab = styled.div`
  width: 135px;
  flex: none;
  box-sizing: border-box;
  height: 24px;
  padding-top: 2px;
  display: flex;
  align-items: center;
  justify-content: center;
  background: #fff;
  border-bottom: 2px solid #217346;
  border-left: 1px solid #c8c6c4;
  border-right: 1px solid #c8c6c4;
  font-family: ${SHEET};
  font-weight: 700;
  font-size: 12.500px;
  color: #217346;
`

const AddSheet = styled.div`
  margin-left: 31px;
  display: flex;
  align-items: center;
`

const TabGap = styled.div`
  width: 479px;
  flex: none;
`

const HScroll = styled.div`
  width: 477px;
  flex: none;
  height: 14px;
  margin-top: 6px;
  display: flex;
`

const HThumb = styled.div`
  flex: 0 0 411px;
  margin-left: 1px;
  box-sizing: border-box;
  border: 1px solid #8a8a8a;
  background: #fff;
`

const HTrack = styled.div`
  flex: 1;
  background: #dcdcdc;
`

const StatusBar = styled.footer`
  flex: 0 0 21px;
  display: flex;
  align-items: center;
  padding-left: 8px;
  background: #f3f2f1;
`

const StatusText = styled.span<{ $pct?: boolean }>`
  font-size: 10.500px;
  color: #555;
  margin-left: ${(p) => (p.$pct ? 8 : 0)}px;
  width: ${(p) => (p.$pct ? 'auto' : '997px')};
  flex: none;
`

const ViewBtn = styled.div<{ $on?: boolean }>`
  width: 37px;
  height: 21px;
  flex: none;
  display: flex;
  align-items: center;
  justify-content: center;
  background: ${(p) => (p.$on ? '#d2d2d2' : 'transparent')};
`

const ZoomZone = styled.div`
  margin-left: 7px;
  display: flex;
  align-items: center;
  gap: 5px;
`

const ZoomTrack = styled.div`
  position: relative;
  width: 93px;
  height: 1px;
  background: #666;
`

const ZoomMid = styled.span`
  position: absolute;
  left: 46px;
  top: -2px;
  width: 1px;
  height: 5px;
  background: #666;
`

const ZoomThumb = styled.span`
  position: absolute;
  left: 15px;
  top: -5px;
  width: 4px;
  height: 11px;
  background: #555;
`

const Taskbar = styled.footer`
  flex: 0 0 37px;
  display: flex;
  align-items: stretch;
  background: linear-gradient(90deg, #20343f 0, #1d2f3e 45%, #1a2b42 100%);
`

const StartBtn = styled.div`
  width: 45px;
  flex: none;
  display: flex;
  align-items: center;
  justify-content: center;
`

const TaskSearch = styled.div`
  position: relative;
  width: 270px;
  flex: none;
  box-sizing: border-box;
  display: flex;
  align-items: center;
  gap: 11px;
  padding-left: 11px;
  background: #f3f3f3;
  font-size: 13px;
  color: #444;
  overflow: hidden;
`

const Scenery = styled.span`
  position: absolute;
  right: 0;
  bottom: 0;
`

const TaskApps = styled.div`
  display: flex;
`

const TaskApp = styled.div<{ $w?: number; $run?: boolean; $active?: boolean }>`
  position: relative;
  width: ${(p) => p.$w ?? 47}px;
  flex: none;
  display: flex;
  align-items: center;
  justify-content: center;
  background: ${(p) => (p.$active ? '#4a5a64' : 'transparent')};

  &::after {
    content: '';
    display: ${(p) => (p.$run ? 'block' : 'none')};
    position: absolute;
    left: ${(p) => (p.$active ? 0 : 4)}px;
    right: ${(p) => (p.$active ? 0 : 4)}px;
    bottom: 0;
    height: 2px;
    background: #7db4dc;
  }
`

const Tray = styled.div`
  margin-left: auto;
  display: flex;
  align-items: center;
  color: #fff;
  padding-right: 16px;
`

const TrayLang = styled.span`
  width: 34px;
  flex: none;
  text-align: center;
  font-size: 10.500px;
`

const Clock = styled.div`
  width: 60px;
  flex: none;
  text-align: center;
  font-size: 10.500px;
  line-height: 18px;
`

const NotifySlot = styled.div`
  width: 30px;
  flex: none;
  margin-left: 4px;
  display: flex;
  justify-content: center;
`
